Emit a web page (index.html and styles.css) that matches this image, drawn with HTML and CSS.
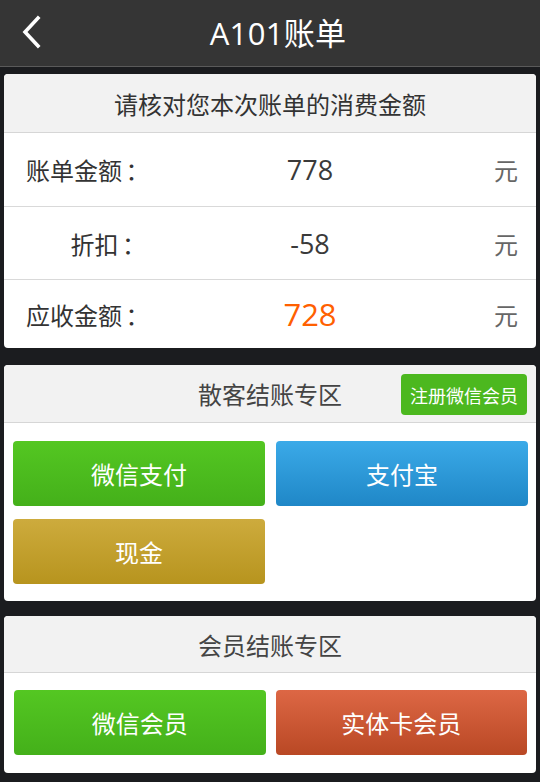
FILE: index.html
```html
<!DOCTYPE html>
<html lang="zh-CN">
<head>
<meta charset="utf-8">
<title>A101账单</title>
<link rel="stylesheet" href="styles.css">
</head>
<body>
<header class="topbar">
  <svg class="back" width="24" height="36" viewBox="0 0 24 36"><path d="M17 3 L4 17 L17 31" fill="none" stroke="#fff" stroke-width="3.6" stroke-linecap="square" stroke-linejoin="miter"/></svg>
  <h1 class="title">A101账单</h1>
</header>
<main class="content">
  <section class="card">
    <div class="card-head">请核对您本次账单的消费金额</div>
    <div class="row">
      <span class="label">账单金额 ：</span>
      <span class="value">778</span>
      <span class="unit">元</span>
    </div>
    <div class="row">
      <span class="label">折扣 ：</span>
      <span class="value">-58</span>
      <span class="unit">元</span>
    </div>
    <div class="row row-last">
      <span class="label">应收金额 ：</span>
      <span class="value value-due">728</span>
      <span class="unit">元</span>
    </div>
  </section>

  <section class="card">
    <div class="card-head head-with-action">
      <span>散客结账专区</span>
      <button class="register">注册微信会员</button>
    </div>
    <div class="btn-grid">
      <button class="pay green">微信支付</button>
      <button class="pay blue">支付宝</button>
      <button class="pay gold">现金</button>
    </div>
  </section>

  <section class="card card-member">
    <div class="card-head head-small">会员结账专区</div>
    <div class="btn-grid grid-member">
      <button class="pay green">微信会员</button>
      <button class="pay red">实体卡会员</button>
    </div>
  </section>
</main>
</body>
</html>
```
FILE: styles.css
```css
* { box-sizing: border-box; }
html, body {
  margin: 0;
  padding: 0;
  background: #1b1c1f;
  font-family: "Open Sans", "Noto Sans CJK SC", sans-serif;
  width: 540px;
  height: 782px;
  overflow: hidden;
}
.topbar {
  position: relative;
  height: 67px;
  background: #353535;
  border-bottom: 1px solid #5a5a5a;
  display: flex;
  align-items: center;
  justify-content: center;
  padding-left: 16px;
}
.back {
  position: absolute;
  left: 21px;
  top: 15px;
}
.title {
  margin: 0;
  color: #fff;
  font-weight: normal;
  font-size: 31px;
  line-height: 1;
  padding-top: 1px;
  letter-spacing: 0.3px;
}
.content {
  padding: 7px 4px 0;
  display: flex;
  flex-direction: column;
  gap: 17px;
}
.card {
  background: #fff;
  border-radius: 4px;
  overflow: hidden;
}
.card-member { margin-top: -2px; }
.card-head {
  height: 59px;
  background: #f2f2f2;
  border-bottom: 1px solid #d6d6d6;
  display: flex;
  align-items: center;
  justify-content: center;
  font-size: 24px;
  color: #333;
}
.head-with-action {
  position: relative;
  height: 58px;
  color: #444;
}
.head-small {
  height: 57px;
  color: #444;
}
.register {
  position: absolute;
  right: 9px;
  top: 9px;
  width: 126px;
  height: 41px;
  border: 0;
  border-radius: 4px;
  background: #4cb81f;
  color: #fff;
  font-family: "Noto Sans CJK SC", sans-serif;
  font-size: 18px;
  padding: 0;
}
.row {
  display: grid;
  grid-template-columns: 120px 1fr 44px;
  align-items: center;
  height: 74px;
  padding: 0 18px 0 22px;
  border-bottom: 1px solid #d9d9d9;
}
.row-last {
  height: 68px;
  border-bottom: 0;
}
.row:nth-child(3) { height: 73px; }
.label {
  text-align: right;
  font-size: 24px;
  color: #333;
  font-family: "Noto Sans CJK SC", sans-serif;
  white-space: nowrap;
  word-spacing: -2px;
}
.value {
  text-align: center;
  font-size: 27px;
  color: #3a3a3a;
  font-family: "Open Sans", sans-serif;
}
.value-due {
  color: #ff6000;
  font-size: 31px;
}
.unit {
  text-align: right;
  font-size: 24px;
  color: #666;
  font-family: "Noto Sans CJK SC", sans-serif;
}
.btn-grid {
  display: grid;
  grid-template-columns: 1fr 1fr;
  column-gap: 11px;
  row-gap: 13px;
  padding: 18px 8px 17px 9px;
}
.grid-member {
  column-gap: 10px;
  padding: 17px 9px 18px 10px;
}
.pay {
  height: 65px;
  border: 0;
  border-radius: 4px;
  color: #fff;
  font-family: "Noto Sans CJK SC", sans-serif;
  font-size: 24px;
  padding: 0;
}
.green { background: linear-gradient(#54c722, #44b01a); }
.blue { background: linear-gradient(#3baae8, #1f87c7); }
.gold { background: linear-gradient(#cdab3d, #b7941e); }
.red { background: linear-gradient(#dd6745, #b94824); }
```
